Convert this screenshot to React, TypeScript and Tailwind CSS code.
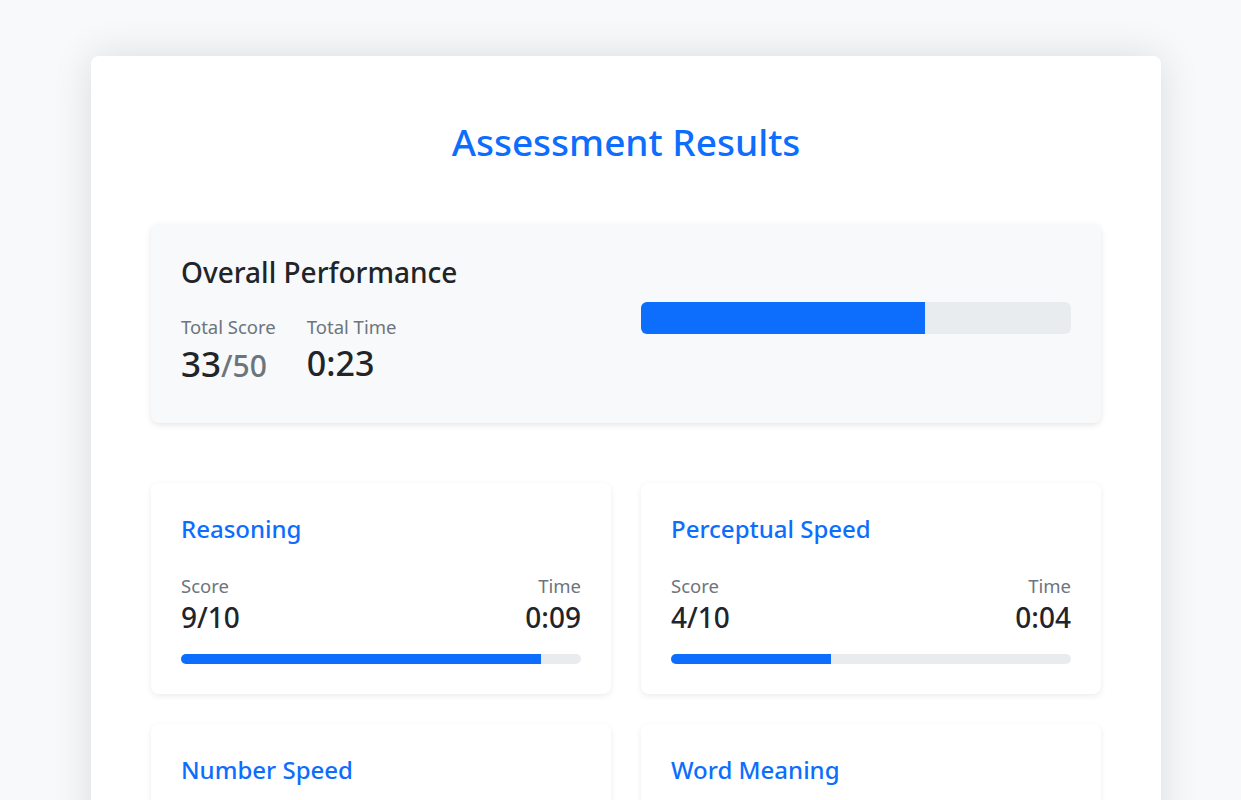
import React from 'react';

type Section = { name: string; score: number; max: number; time: string };

const sections: Section[] = [
  { name: 'Reasoning', score: 9, max: 10, time: '0:09' },
  { name: 'Perceptual Speed', score: 4, max: 10, time: '0:04' },
  { name: 'Number Speed', score: 0, max: 10, time: '0:00' },
  { name: 'Word Meaning', score: 0, max: 10, time: '0:00' },
];

const font = { fontFamily: '"Noto Sans", "Open Sans", sans-serif' };

const SectionCard: React.FC<{ s: Section }> = ({ s }) => (
  <div className="bg-white rounded-lg p-[30px] shadow-[0_2px_6px_rgba(0,0,0,0.08)]">
    <h4 className="text-[24px] leading-[1.3] text-[#0d6efd] font-medium mb-[27px]">{s.name}</h4>
    <div className="flex justify-between">
      <div>
        <div className="text-[18.5px] leading-[1.65] text-[#6c757d]">Score</div>
        <div className="text-[28px] leading-[1.2] text-[#212529] font-medium">
          {s.score}/{s.max}
        </div>
      </div>
      <div className="text-right">
        <div className="text-[18.5px] leading-[1.65] text-[#6c757d]">Time</div>
        <div className="text-[28px] leading-[1.2] text-[#212529] font-medium">{s.time}</div>
      </div>
    </div>
    <div className="mt-[19px] h-[10px] rounded-full bg-[#e9ecef] overflow-hidden">
      <div className="h-full bg-[#0d6efd]" style={{ width: `${(s.score / s.max) * 100}%` }} />
    </div>
  </div>
);

const App: React.FC = () => {
  const total = 33;
  const max = 50;
  return (
    <div className="min-h-screen bg-[#f8f9fa] pt-[56px] pb-10" style={font}>
      <div className="ml-[91px] w-[1070px] bg-white rounded-lg p-[60px] shadow-[0_0_40px_rgba(0,0,0,0.12)]">
        <h1 className="mt-[2px] text-center text-[37px] leading-[1.3] text-[#0d6efd] font-medium">
          Assessment Results
        </h1>

        {/* Overall */}
        <div className="mt-[58px] bg-[#f8f9fa] rounded-lg p-[30px] shadow-[0_2px_6px_rgba(0,0,0,0.1)] grid grid-cols-2 gap-[30px]">
          <div>
            <h3 className="text-[28px] leading-[1.3] text-[#212529] font-medium mb-[23px]">Overall Performance</h3>
            <div className="flex gap-[31px] mb-[6px]">
              <div>
                <div className="text-[18.5px] leading-[1.5] text-[#6c757d]">Total Score</div>
                <div className="text-[35px] leading-[1.3] text-[#212529] font-medium">
                  {total}
                  <span className="text-[30px] text-[#6c757d]">/{max}</span>
                </div>
              </div>
              <div>
                <div className="text-[18.5px] leading-[1.5] text-[#6c757d]">Total Time</div>
                <div className="text-[34px] leading-[1.3] text-[#212529] font-medium">0:23</div>
              </div>
            </div>
          </div>
          <div className="pt-[48px]">
            <div className="h-[32px] rounded-md bg-[#e9ecef] overflow-hidden">
              <div className="h-full bg-[#0d6efd]" style={{ width: `${(total / max) * 100}%` }} />
            </div>
          </div>
        </div>

        <div className="mt-[60px] grid grid-cols-2 gap-[30px]">
          {sections.map((s) => (
            <SectionCard key={s.name} s={s} />
          ))}
        </div>
      </div>
    </div>
  );
};

export default App;
